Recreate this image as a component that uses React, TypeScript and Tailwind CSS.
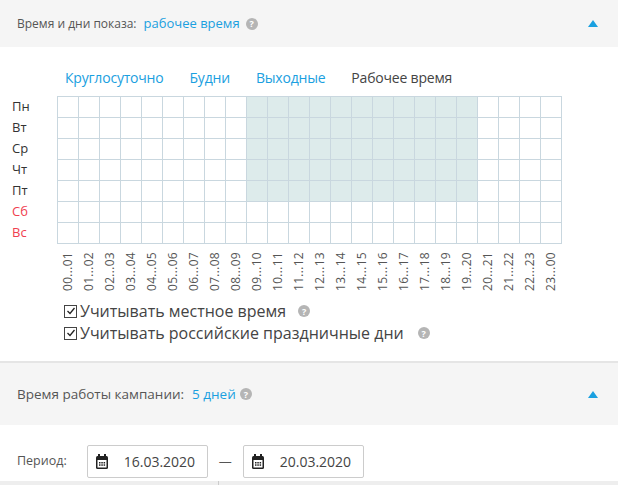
import React from "react";

const Q = () => (
  <span className="inline-flex items-center justify-center w-[12px] h-[12px] rounded-full bg-[#b5b5b5] text-white text-[9px] font-bold leading-none">?</span>
);
const Cal = () => (
  <svg width="14" height="16" viewBox="0 0 14 16">
    <rect x="3" y="0" width="2" height="3" fill="#222" />
    <rect x="9" y="0" width="2" height="3" fill="#222" />
    <rect x="1" y="2" width="12" height="13" rx="1.5" fill="#222" />
    <rect x="2.5" y="6" width="9" height="7.5" fill="#fff" />
    {[0, 1, 2].map((i) => [0, 1].map((j) => (
      <rect key={i + "-" + j} x={4 + i * 2.3} y={8 + j * 2.3} width="1.5" height="1.5" fill="#222" />
    )))}
  </svg>
);
const Check = () => (
  <span className="inline-flex items-center justify-center w-[13px] h-[13px] border border-[#444] bg-white">
    <svg width="10" height="10" viewBox="0 0 10 10"><path d="M1.5 5 L4 7.5 L8.5 2" stroke="#222" strokeWidth="1.3" fill="none" /></svg>
  </span>
);

export default function App() {
  const days = ["Пн", "Вт", "Ср", "Чт", "Пт", "Сб", "Вс"];
  const hours = Array.from({ length: 24 }, (_, i) => i);
  const p = (n: number) => String(n).padStart(2, "0");
  return (
    <div className="w-[618px] h-[485px] overflow-hidden bg-white text-[#555] text-[13px]" style={{ fontFamily: '"Open Sans", sans-serif' }}>
      <div className="h-[47px] bg-[#f5f5f5] flex items-center pl-[17px] pr-[20px] text-[12px]">
        <span>Время и дни показа:</span>
        <span className="ml-[7px] text-[#1aa0e0] text-[13px]">рабочее время</span>
        <span className="ml-[6px] flex"><Q /></span>
        <span className="ml-auto w-0 h-0 border-l-[5px] border-r-[5px] border-b-[7px] border-l-transparent border-r-transparent border-b-[#1aa0e0]" />
      </div>
      <div className="flex gap-[26px] pl-[65px] mt-[20px] h-[20px] items-center text-[14px] tracking-[-0.2px]">
        <span className="text-[#1aa0e0]">Круглосуточно</span>
        <span className="text-[#1aa0e0]">Будни</span>
        <span className="text-[#1aa0e0]">Выходные</span>
        <span className="text-[#444]">Рабочее время</span>
      </div>
      <div className="flex mt-[9px]">
        <div className="w-[57px] pl-[12px] flex flex-col">
          {days.map((d, i) => (
            <div key={d} className={"h-[21px] leading-[21px] text-[13px] " + (i >= 5 ? "text-[#f0404f]" : "text-[#333]")}>{d}</div>
          ))}
        </div>
        <div>
          <div className="border-t border-l border-[#c9d7df] w-[505px]">
            {days.map((d, r) => (
              <div key={d} className="flex">
                {hours.map((h) => (
                  <div key={h} className={"w-[21px] h-[21px] border-r border-b border-[#c9d7df] " + (r < 5 && h >= 9 && h <= 19 ? "bg-[#ddebeb]" : "bg-white")} />
                ))}
              </div>
            ))}
          </div>
          <div className="flex mt-[8px]">
            {hours.map((h) => (
              <div key={h} className="w-[21px] flex justify-center">
                <span className="text-[12px] text-[#555] leading-none tracking-[0.3px]" style={{ writingMode: "vertical-rl", transform: "rotate(180deg)" }}>
                  {p(h)}...{p((h + 1) % 24)}
                </span>
              </div>
            ))}
          </div>
        </div>
      </div>
      <div className="pl-[64px] mt-[12px] flex flex-col gap-[6px] text-[16px] text-[#444]">
        <div className="flex items-center h-[16px]"><Check /><span className="ml-[3px]">Учитывать местное время</span><span className="ml-[12px] flex"><Q /></span></div>
        <div className="flex items-center h-[16px]"><Check /><span className="ml-[3px]">Учитывать российские праздничные дни</span><span className="ml-[14px] flex"><Q /></span></div>
      </div>
      <div className="mt-[20px] border-t-2 border-[#e5e5e5] h-[64px] bg-[#f5f5f5] flex items-center pl-[17px] pr-[20px] text-[13.5px]">
        <span>Время работы кампании:</span>
        <span className="ml-[8px] text-[#1aa0e0]">5 дней</span>
        <span className="ml-[4px] flex"><Q /></span>
        <span className="ml-auto w-0 h-0 border-l-[5px] border-r-[5px] border-b-[7px] border-l-transparent border-r-transparent border-b-[#1aa0e0]" />
      </div>
      <div className="flex items-center pl-[17px] mt-[20px] h-[33px]">
        <span className="text-[12.5px]">Период:</span>
        <div className="ml-[20px] w-[121px] h-[33px] border border-[#ccc] rounded-[2px] flex items-center pl-[7px]"><Cal /><span className="ml-[15px] text-[14px] text-[#444]">16.03.2020</span></div>
        <span className="mx-[11px]">—</span>
        <div className="w-[121px] h-[33px] border border-[#ccc] rounded-[2px] flex items-center pl-[7px]"><Cal /><span className="ml-[15px] text-[14px] text-[#444]">20.03.2020</span></div>
      </div>
      <div className="mt-[3px] h-[10px] bg-[#eee] flex"><div className="ml-[218px] w-px bg-[#ccc]" /></div>
    </div>
  );
}
